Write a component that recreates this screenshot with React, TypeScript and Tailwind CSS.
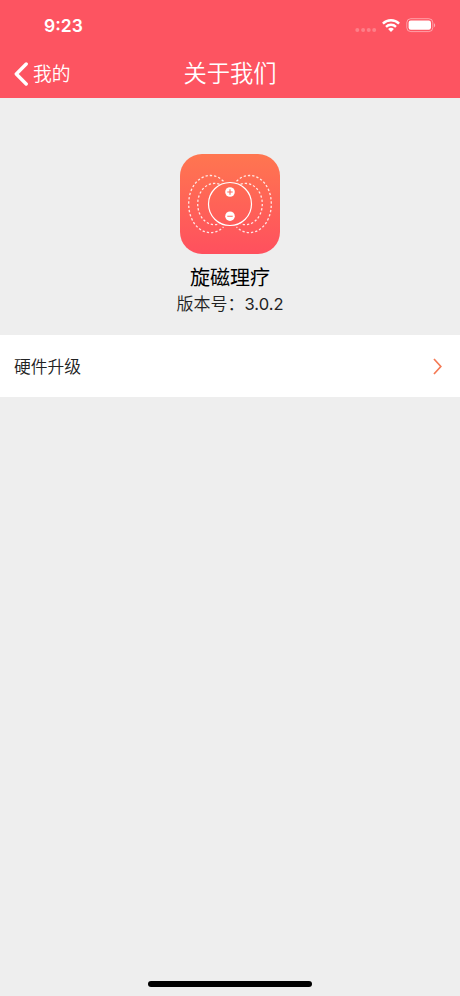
import React from 'react'

const StatusBar: React.FC = () => (
  <div className="flex h-[50px] items-center justify-between pr-[24px] pl-[44px]">
    <span className="pt-[2px] font-['Inter',sans-serif] text-[17.5px] leading-none font-semibold">
      9:23
    </span>
    <svg width="82" height="18" viewBox="354 16 82 18" fill="none">
      {/* signal */}
      <g fill="#fff" fillOpacity="0.25">
        <circle cx="357.3" cy="30" r="2" />
        <circle cx="363.1" cy="30" r="2" />
        <circle cx="368.7" cy="30" r="2" />
        <circle cx="374.2" cy="30" r="2" />
      </g>
      {/* wifi */}
      <g stroke="#fff" strokeWidth="2.4">
        <path d="M382.9 23.6a11.6 11.6 0 0 1 16.2 0" />
        <path d="M386 26.8a7.2 7.2 0 0 1 10 0" />
      </g>
      <path d="M388.1 29.1a4.2 4.2 0 0 1 5.8 0L391 32z" fill="#fff" />
      {/* battery */}
      <rect
        x="406.8"
        y="18.7"
        width="26"
        height="12.9"
        rx="4"
        stroke="#fff"
        strokeOpacity="0.45"
      />
      <rect x="408.6" y="20.6" width="22.4" height="9.2" rx="2.2" fill="#fff" />
      <path d="M434 23.2c1.6.6 1.6 3.4 0 4z" fill="#fff" fillOpacity="0.5" />
    </svg>
  </div>
)

const NavBar: React.FC = () => (
  <div className="grid h-[48px] grid-cols-3 items-center font-[350]">
    <button className="flex items-center pl-[14px]">
      <svg width="15" height="24" viewBox="0 0 15 24" fill="none">
        <path
          d="M12.2 2 2.3 12l9.9 10"
          stroke="#fff"
          strokeWidth="3.4"
          strokeLinecap="round"
          strokeLinejoin="round"
        />
      </svg>
      <span className="ml-[4px] pb-[2px] text-[18.8px] leading-[24px]">我的</span>
    </button>
    <h1 className="pb-[5px] text-center text-[23.3px] leading-[30px] whitespace-nowrap">
      关于我们
    </h1>
  </div>
)

const AppLogo: React.FC = () => {
  // 左右对称的磁力线
  const fieldLines = (
    <>
      <path d="M43.5 27.2C39 23 35 21.5 30.7 21.5 18 21.5 8.7 34 8.7 50s9.3 28.6 22 28.6c4.3 0 8.3-1.6 12.8-5.6" />
      <path d="M39.5 30.3C27.5 26.2 17.7 37 17.7 50s9.8 24 21.8 19.8" />
    </>
  )

  return (
    <svg width="100" height="100" viewBox="0 0 100 100" fill="none">
      <defs>
        <linearGradient id="logoBg" x1="0" y1="0" x2="0" y2="1">
          <stop offset="0" stopColor="#ff7650" />
          <stop offset="1" stopColor="#ff505e" />
        </linearGradient>
      </defs>
      <rect width="100" height="100" rx="22" fill="url(#logoBg)" />
      <g stroke="#fff" strokeOpacity="0.85" strokeWidth="1.3" strokeDasharray="2.3 2">
        {fieldLines}
        <g transform="translate(100 0) scale(-1 1)">{fieldLines}</g>
      </g>
      <circle cx="50" cy="50" r="21.5" stroke="#fff" strokeWidth="1.2" />
      <circle cx="50" cy="38" r="4.8" fill="#fff" />
      <circle cx="50" cy="62.2" r="4.8" fill="#fff" />
      <path
        d="M47.3 38h5.4M50 35.3v5.4M47.3 62.2h5.4"
        stroke="#ff6457"
        strokeWidth="1.1"
      />
    </svg>
  )
}

const App: React.FC = () => {
  return (
    <div className="flex h-[996px] w-[460px] flex-col bg-[#eeeeee] font-['Noto_Sans_CJK_SC',sans-serif]">
      <header className="h-[98px] bg-[#fd5461] text-white">
        <StatusBar />
        <NavBar />
      </header>

      <section className="flex h-[237px] flex-col items-center pt-[55.5px]">
        <AppLogo />
        <h2 className="mt-[9.5px] text-[20px] leading-[28px] text-black">
          旋磁理疗
        </h2>
        <p className="text-[17px] leading-[24px] font-[350] text-[#222222]">
          版本号：
          <span className="font-['Inter',sans-serif] text-[16.5px] font-normal">
            3.0.2
          </span>
        </p>
      </section>

      <button className="flex h-[62px] w-full items-center justify-between bg-white pr-[18px] pl-[14px]">
        <span className="text-[16.8px] leading-[24px] font-[350] text-[#222222]">
          硬件升级
        </span>
        <svg width="9" height="17" viewBox="0 0 9 17" fill="none">
          <path d="M1 1l6.8 7.5L1 16" stroke="#f47a55" strokeWidth="1.7" />
        </svg>
      </button>

      <div className="mt-auto mb-[9px] h-[6px] w-[164px] self-center rounded-full bg-black" />
    </div>
  )
}

export default App
